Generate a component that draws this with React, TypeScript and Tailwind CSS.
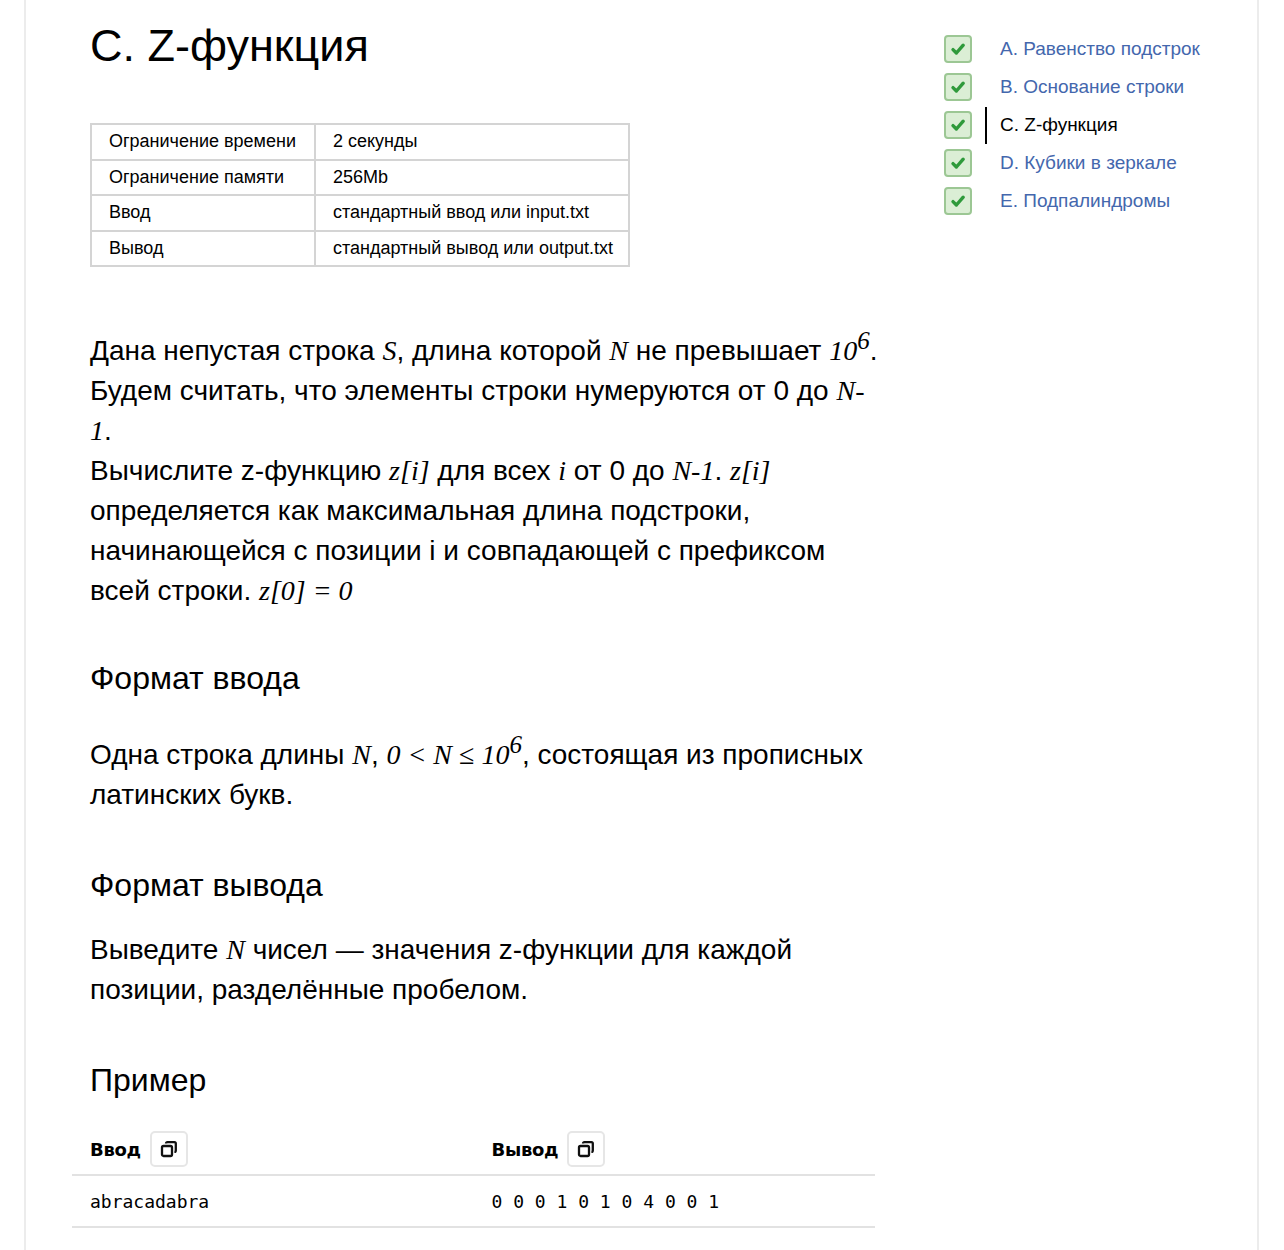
const sans = { fontFamily: '"Liberation Sans", Arial, sans-serif' };

function M({ children }: { children: React.ReactNode }) {
  return <span className="font-['Liberation_Serif',serif] italic leading-none">{children}</span>;
}

function Sup() {
  return <sup className="text-[25px] leading-none -top-[0.45em]">6</sup>;
}

function CopyIcon() {
  return (
    <svg width="20" height="20" viewBox="0 0 20 20" fill="none" stroke="#111" strokeWidth="2.3">
      <rect x="3" y="7" width="10" height="10" rx="1.5" />
      <path d="M7 4.2V4.5c0-.8.6-1.4 1.4-1.4h7c.8 0 1.4.6 1.4 1.4v7c0 .8-.6 1.4-1.4 1.4H16" />
    </svg>
  );
}

function Tick() {
  return (
    <svg width="18" height="18" viewBox="0 0 18 18" fill="none" stroke="#2f9a3b" strokeWidth="3.4" strokeLinecap="round" strokeLinejoin="round">
      <path d="M4 9.6l3.4 3.4L14.2 5.2" />
    </svg>
  );
}

const limits = [
  ['Ограничение времени', '2 секунды'],
  ['Ограничение памяти', '256Mb'],
  ['Ввод', 'стандартный ввод или input.txt'],
  ['Вывод', 'стандартный вывод или output.txt'],
];

const problems = [
  { name: 'A. Равенство подстрок', active: false },
  { name: 'B. Основание строки', active: false },
  { name: 'C. Z-функция', active: true },
  { name: 'D. Кубики в зеркале', active: false },
  { name: 'E. Подпалиндромы', active: false },
];

export default function App() {
  return (
    <div className="bg-white min-h-[1250px] text-black" style={sans}>
      <div className="ml-[24px] w-[1235px] min-h-[1250px] border-x-2 border-[#ececec] flex">
        {/* main column */}
        <main className="w-[866px] pl-[64px]">
          <h1 className="text-[45px] leading-[48px] mt-[22px]">C. Z-функция</h1>

          <table className="mt-[53px] w-[540px] border-collapse text-[18px]">
            <tbody>
              {limits.map(([k, v]) => (
                <tr key={k} className="h-[35.5px]">
                  <td className="border-2 border-[#d4d4d4] pl-[17px] w-[224px]">{k}</td>
                  <td className="border-2 border-[#d4d4d4] pl-[17px]">{v}</td>
                </tr>
              ))}
            </tbody>
          </table>

          <p className="mt-[64px] w-[792px] text-[28px] leading-[40px]">
            Дана непустая строка <M>S</M>, длина которой <M>N</M> не превышает <M>10<Sup /></M>.
            Будем считать, что элементы строки нумеруются от 0 до <M>N-1</M>.
            <br />
            Вычислите z-функцию <M>z[i]</M> для всех <M>i</M> от 0 до <M>N-1</M>. <M>z[i]</M> определяется как
            максимальная длина подстроки, начинающейся с позиции i и совпадающей с префиксом всей строки. <M>z[0]&nbsp;=&nbsp;0</M>
          </p>

          <h2 className="mt-[47px] text-[32px] leading-[40px]">Формат ввода</h2>
          <p className="mt-[37px] w-[800px] text-[28px] leading-[40px]">
            Одна строка длины <M>N</M>, <M>0&nbsp;&lt;&nbsp;N&nbsp;≤&nbsp;10<Sup /></M>, состоящая из
            прописных латинских букв.
          </p>

          <h2 className="mt-[50px] text-[32px] leading-[40px]">Формат вывода</h2>
          <p className="mt-[25px] w-[760px] text-[28px] leading-[40px]">
            Выведите <M>N</M> чисел — значения z-функции для каждой позиции, разделённые пробелом.
          </p>

          <h2 className="mt-[50px] text-[32px] leading-[40px]">Пример</h2>

          <div className="mt-[20px] -ml-[18px] w-[803px]">
            <div className="grid grid-cols-2 border-b-2 border-[#e2e2e2] h-[56px] items-center">
              {['Ввод', 'Вывод'].map((t) => (
                <div key={t} className="flex items-center gap-[9px] pl-[18px] pt-[4px]">
                  <span className="font-['DejaVu_Sans',sans-serif] font-bold text-[18px] tracking-[-0.3px]">{t}</span>
                  <span className="w-[38px] h-[36px] rounded-[5px] border-2 border-[#e6e6e6] flex items-center justify-center">
                    <CopyIcon />
                  </span>
                </div>
              ))}
            </div>
            <div className="grid grid-cols-2 border-b-2 border-[#e2e2e2] h-[52px] items-center font-['DejaVu_Sans_Mono',monospace] text-[18px]">
              <div className="pl-[18px]">abracadabra</div>
              <div className="pl-[18px]">0 0 0 1 0 1 0 4 0 0 1</div>
            </div>
          </div>
        </main>

        {/* problem list */}
        <aside className="pl-[52px] pt-[30px]">
          {problems.map((p) => (
            <div key={p.name} className="flex items-center h-[38px]">
              <span className="w-[28px] h-[28px] rounded-[4px] border-2 border-[#9cc794] bg-[#dbeed5] flex items-center justify-center">
                <Tick />
              </span>
              <span className={`ml-[13px] h-[37px] w-[2px] ${p.active ? 'bg-black' : 'bg-transparent'}`} />
              <span className={`ml-[13px] text-[19px] ${p.active ? 'text-black' : 'text-[#4467ad]'}`}>{p.name}</span>
            </div>
          ))}
        </aside>
      </div>
    </div>
  );
}
